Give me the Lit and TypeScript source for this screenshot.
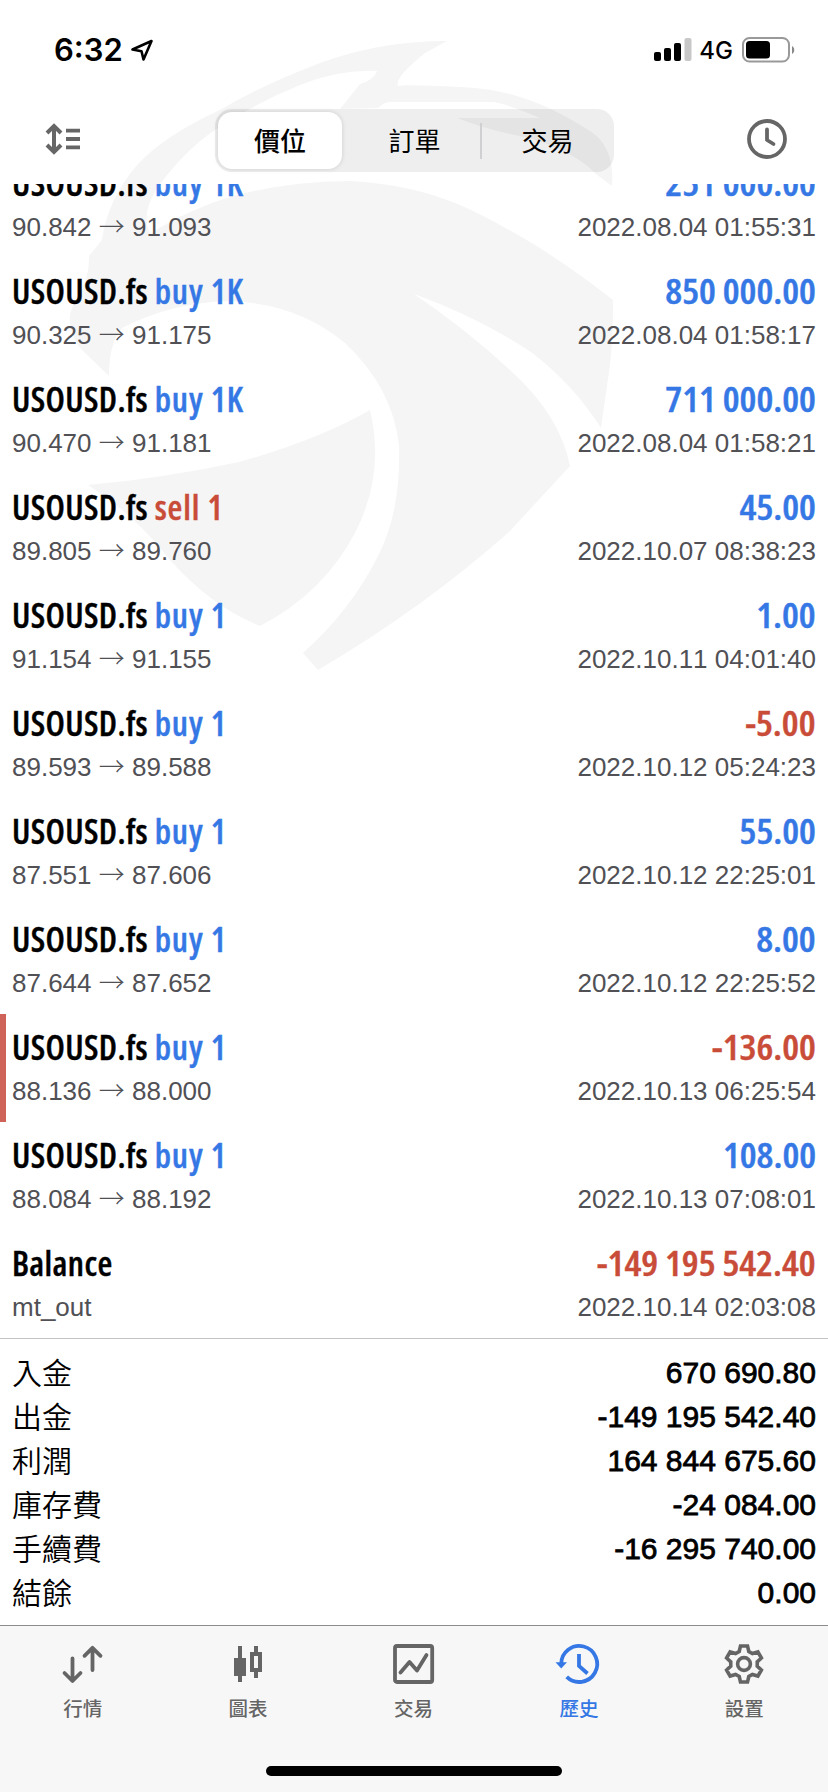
import { LitElement, html, svg, css } from "lit";
import { customElement, property } from "lit/decorators.js";
import { classMap } from "lit/directives/class-map.js";

interface Deal {
  symbol: string;
  side?: "buy" | "sell";
  volume?: string;
  detail: string;
  to?: string;
  profit: string;
  time: string;
  stopped?: boolean;
}

const S = "USOUSD.fs";
const DEALS: Deal[] = [
  { symbol: S, side: "buy", volume: "1K", detail: "90.842", to: "91.093", profit: "251 000.00", time: "2022.08.04 01:55:31" },
  { symbol: S, side: "buy", volume: "1K", detail: "90.325", to: "91.175", profit: "850 000.00", time: "2022.08.04 01:58:17" },
  { symbol: S, side: "buy", volume: "1K", detail: "90.470", to: "91.181", profit: "711 000.00", time: "2022.08.04 01:58:21" },
  { symbol: S, side: "sell", volume: "1", detail: "89.805", to: "89.760", profit: "45.00", time: "2022.10.07 08:38:23" },
  { symbol: S, side: "buy", volume: "1", detail: "91.154", to: "91.155", profit: "1.00", time: "2022.10.11 04:01:40" },
  { symbol: S, side: "buy", volume: "1", detail: "89.593", to: "89.588", profit: "-5.00", time: "2022.10.12 05:24:23" },
  { symbol: S, side: "buy", volume: "1", detail: "87.551", to: "87.606", profit: "55.00", time: "2022.10.12 22:25:01" },
  { symbol: S, side: "buy", volume: "1", detail: "87.644", to: "87.652", profit: "8.00", time: "2022.10.12 22:25:52" },
  { symbol: S, side: "buy", volume: "1", detail: "88.136", to: "88.000", profit: "-136.00", time: "2022.10.13 06:25:54", stopped: true },
  { symbol: S, side: "buy", volume: "1", detail: "88.084", to: "88.192", profit: "108.00", time: "2022.10.13 07:08:01" },
  { symbol: "Balance", detail: "mt_out", profit: "-149 195 542.40", time: "2022.10.14 02:03:08" },
];

const TOTALS: [string, string][] = [
  ["入金", "670 690.80"],
  ["出金", "-149 195 542.40"],
  ["利潤", "164 844 675.60"],
  ["庫存費", "-24 084.00"],
  ["手續費", "-16 295 740.00"],
  ["結餘", "0.00"],
];

function gearPath(): string {
  const pts: string[] = [];
  const at = (deg: number, r: number) => {
    const a = (deg * Math.PI) / 180;
    pts.push(`${(22 + r * Math.cos(a)).toFixed(2)} ${(22 + r * Math.sin(a)).toFixed(2)}`);
  };
  for (let k = 0; k < 6; k++) {
    const c = -90 + k * 60;
    at(c - 21, 13.4);
    at(c - 11, 18.4);
    at(c + 11, 18.4);
    at(c + 21, 13.4);
  }
  return `M${pts.join("L")}Z`;
}

const ICONS = {
  quotes: svg`<g fill="none" stroke="currentColor" stroke-width="3.8" stroke-linecap="round" stroke-linejoin="round">
    <path d="M11.500 16.500V38M3.500 31l8 8 8-8M31.500 28V6.500M23.500 13.800l8-8 8 8"/></g>`,
  chart: svg`<g fill="currentColor"><path d="M12 4h4v12h4v18h-4v6h-4v-6H8V16h4z"/>
    <path fill-rule="evenodd" d="M28 4h4v6h4v20h-4v6h-4v-6h-4V10h4zM28 14v12h4V14z"/></g>`,
  trade: svg`<g fill="none" stroke="currentColor" stroke-width="3.8" stroke-linejoin="round">
    <rect x="3" y="4" width="37.200" height="36" rx="2"/>
    <path d="M8.500 30.500l9-10.500 7.500 8.500L34.500 13" stroke-linecap="round"/></g>`,
  history: svg`<g fill="none" stroke="currentColor" stroke-width="3.800">
    <path d="M4.200 22A18 18 0 1 1 9.700 34.900M22 12v12l8.500 7.500"/>
    <path d="M-1.500 20.300H10L4.200 26.500z" fill="currentColor" stroke="none"/></g>`,
  settings: svg`<g fill="none" stroke="currentColor" stroke-width="3.600" stroke-linejoin="miter">
    <path d=${gearPath()}/><circle cx="22" cy="22" r="6.400"/></g>`,
};

@customElement("deal-row")
class DealRow extends LitElement {
  @property({ attribute: false }) deal!: Deal;

  static styles = css`
    :host {
      display: block;
      height: 108px;
      flex: none;
    }
    .row {
      box-sizing: border-box;
      height: 108px;
      padding: 10px 12px 0 12px;
      position: relative;
    }
    .row.stopped::before {
      content: "";
      position: absolute;
      left: 0;
      top: 0;
      width: 6px;
      height: 108px;
      background: #cf635a;
    }
    .line {
      display: flex;
      justify-content: space-between;
      white-space: pre;
    }
    .main {
      height: 47px;
      font: 600 34px/46px "Open Sans", "Noto Sans", sans-serif;
      font-stretch: 75%;
      color: #000;
      -webkit-text-stroke: 0.4px currentColor;
    }
    .left { letter-spacing: 0.38px; }
    .side { letter-spacing: 0.9px; }
    .right {
      transform: scaleX(1.108);
      transform-origin: right center;
    }
    .sub {
      height: 40px;
      font: 26px/40px "Liberation Sans", Arial, sans-serif;
      font-kerning: none;
      color: #505055;
    }
    .arrow {
      font-family: "Noto Sans CJK TC", sans-serif;
      font-weight: 300;
      line-height: 1;
    }
    .blue { color: #3578e5; -webkit-text-stroke-color: #3578e5; }
    .red { color: #c94c39; -webkit-text-stroke-color: #c94c39; }
  `;

  render() {
    const d = this.deal;
    const loss = d.profit.startsWith("-");
    return html`<div class=${classMap({ row: true, stopped: !!d.stopped })}>
      <div class="line main">
        <span class="left">${d.symbol}${d.side
          ? html` <span class=${d.side === "buy" ? "side blue" : "side red"}>${d.side} ${d.volume}</span>`
          : ""}</span>
        <span class=${loss ? "right red" : "right blue"}>${d.profit}</span>
      </div>
      <div class="line sub">
        <span>${d.detail}${d.to ? html` <span class="arrow">→</span> ${d.to}` : ""}</span>
        <span>${d.time}</span>
      </div>
    </div>`;
  }
}

@customElement("tab-item")
class TabItem extends LitElement {
  @property() icon: keyof typeof ICONS = "quotes";
  @property() label = "";
  @property({ type: Boolean }) active = false;

  static styles = css`
    :host { display: block; flex: 1; }
    .tab {
      display: flex;
      flex-direction: column;
      align-items: center;
      padding-top: 16px;
      color: #656565;
      font: 500 19.500px/28px "Noto Sans CJK TC", sans-serif;
    }
    .tab.active { color: #3578e5; }
    .icon { width: 44px; height: 44px; overflow: visible; display: block; }
    .label { margin-top: 8px; }
  `;

  render() {
    return html`<div class=${classMap({ tab: true, active: this.active })}>
      <svg class="icon" viewBox="0 0 44 44">${ICONS[this.icon]}</svg>
      <span class="label">${this.label}</span>
    </div>`;
  }
}

@customElement("app-root")
class AppRoot extends LitElement {
  static styles = css`
    :host { display: block; }
    .screen {
      position: relative;
      width: 828px;
      height: 1792px;
      overflow: hidden;
      display: flex;
      flex-direction: column;
      background: #fff;
      isolation: isolate;
    }
    .watermark {
      position: absolute;
      left: 0;
      top: 0;
      z-index: -1;
      width: 828px;
      height: 700px;
      pointer-events: none;
    }
    .status {
      height: 88px;
      flex: none;
      display: flex;
      justify-content: space-between;
      padding: 0 32px 0 54px;
      box-sizing: border-box;
    }
    .clock { display: flex; gap: 8px; padding-top: 30px; height: 40px; }
    .time { font: 600 31px/40px Inter, sans-serif; color: #000; }
    .signals { display: flex; padding-top: 36px; }
    .net { font: 500 24px/30px Inter, sans-serif; margin: 0 9px 0 7px; color: #000; }
    .loc { margin-top: 8px; }
    .toolbar {
      height: 96px;
      flex: none;
      display: flex;
      justify-content: space-between;
      align-items: flex-start;
      padding: 21px 39px 0 44px;
      box-sizing: border-box;
    }
    .sort { margin-top: 12px; width: 40px; height: 36px; margin-right: 9px; }
    .segments {
      display: flex;
      width: 399px;
      height: 63px;
      border-radius: 17px;
      background: rgba(0, 0, 0, 0.068);
      margin-left: -9px;
    }
    .segment {
      flex: 0 0 133px;
      box-sizing: border-box;
      padding-bottom: 2px;
      display: flex;
      align-items: center;
      justify-content: center;
      font: 400 26px/36px "Noto Sans CJK TC", sans-serif;
      color: #000;
    }
    .segment.on {
      flex-basis: 124px;
      margin: 3px 6px 3px 3px;
      border-radius: 14px;
      background: #fff;
      box-shadow: 0 0 5px rgba(0, 0, 0, 0.14);
      font-weight: 500;
    }
    .rule { width: 2px; height: 36px; margin: 14px -1px 0 -1px; background: #d0d0d2; }
    .list {
      height: 1154px;
      flex: none;
      overflow: hidden;
      display: flex;
      flex-direction: column;
      justify-content: flex-end;
    }
    .totals {
      flex: none;
      height: 287px;
      box-sizing: border-box;
      border-top: 1px solid #c4c4c4;
      padding: 11px 12px 0 12px;
    }
    .total { display: flex; justify-content: space-between; height: 44px; color: #000; }
    .name { font: 350 30px/44px "Noto Sans CJK TC", sans-serif; margin-top: -1px; }
    .value {
      font: 30px/44px "Liberation Sans", Arial, sans-serif;
      font-kerning: none;
      -webkit-text-stroke: 0.8px #000;
      padding-top: 1px;
    }
    .tabs {
      flex: 1;
      display: flex;
      align-items: flex-start;
      background: #f7f7f7;
      border-top: 1px solid #8c8c8c;
      padding-right: 1px;
    }
    .home {
      position: absolute;
      left: 266px;
      bottom: 16px;
      width: 296px;
      height: 10px;
      border-radius: 5px;
      background: #000;
    }
  `;

  render() {
    return html`<div class="screen">
      <svg class="watermark" viewBox="0 0 828 700">
        <g fill="#f5f5f5">
          <path d="M447 41Q380 41 320 63Q260 86 222 109Q165 135 138 164Q108 198 102 240L89 256Q90 277 77 299Q61 321 80 348L109 376Q109 343 122 328Q170 303 228 301Q297 303 345 343Q393 388 399 446Q401 513 377 558Q350 611 303 653L318 670Q425 607 510 531L570 466Q560 415 510 370Q467 330 414 294Q478 317 531 352Q573 384 601 428L608 379Q613 348 613 300Q575 270 535 245Q490 218 460 205Q410 184 350 181Q270 182 212 203Q175 217 150 234Q140 214 158 187Q185 150 215 130Q255 103 300 85Q340 69 377 71Q374 80 360 84L340 109L378 108Q384 102 390 102H494Q510 105 540 118L457 118Q490 131 530 138Q575 152 596 174L612 186Q615 147 590 131Q530 92 475 88Q410 84 398 86Q394 78 425 53Z"/>
          <path d="M370 410Q318 440 239 462Q165 478 88 485Q133 513 170 560Q212 607 260 626Q324 593 356 531Q385 473 370 410Z"/>
        </g>
      </svg>
      <div class="status">
        <div class="clock">
          <span class="time">6:32</span>
          <svg class="loc" width="24" height="26" viewBox="0 0 24 26">
            <path d="M1.500 11.500L20.500 3 12.500 21.500 10.500 13.200z" fill="none" stroke="#000" stroke-width="2.600" stroke-linejoin="round"/>
          </svg>
        </div>
        <div class="signals">
          <svg width="38" height="28" viewBox="0 0 38 28">
            <rect x="0" y="16" width="7" height="9" rx="2"/>
            <rect x="10" y="12" width="7" height="13" rx="2"/>
            <rect x="20" y="7" width="7" height="18" rx="2"/>
            <rect x="30.500" y="2" width="7" height="23" rx="2" fill="#c8c8c8"/>
          </svg>
          <span class="net">4G</span>
          <svg width="54" height="28" viewBox="0 0 54 28">
            <rect x="1" y="2" width="46" height="23.500" rx="6.500" fill="none" stroke="#999" stroke-width="2"/>
            <rect x="4" y="5" width="24" height="17.500" rx="3.500"/>
            <path d="M50 10c3 1.500 3 6.500 0 8z" fill="#888"/>
          </svg>
        </div>
      </div>
      <div class="toolbar">
        <svg class="sort" viewBox="0 0 40 36">
          <path d="M10 5.500v25M3 12l7-7 7 7M3 24l7 7 7-7" fill="none" stroke="#666" stroke-width="4"/>
          <path d="M22 7.800h14v3.800H22zM22 16.100h14v3.800H22zM22 24.400h14v3.800H22z" fill="#666"/>
        </svg>
        <div class="segments">
          <div class="segment on">價位</div>
          <div class="segment">訂單</div>
          <div class="rule"></div>
          <div class="segment">交易</div>
        </div>
        <svg width="44" height="60" viewBox="0 0 44 60">
          <g fill="none" stroke="#666" stroke-width="3.800">
            <circle cx="22" cy="30" r="18"/>
            <path d="M22 20.500V31l6.500 4" stroke-linecap="round" stroke-linejoin="round"/>
          </g>
        </svg>
      </div>
      <div class="list">${DEALS.map((d) => html`<deal-row .deal=${d}></deal-row>`)}</div>
      <div class="totals">
        ${TOTALS.map(
          ([name, value]) => html`<div class="total"><span class="name">${name}</span><span class="value">${value}</span></div>`
        )}
      </div>
      <div class="tabs">
        <tab-item icon="quotes" label="行情"></tab-item>
        <tab-item icon="chart" label="圖表"></tab-item>
        <tab-item icon="trade" label="交易"></tab-item>
        <tab-item icon="history" label="歷史" active></tab-item>
        <tab-item icon="settings" label="設置"></tab-item>
      </div>
      <div class="home"></div>
    </div>`;
  }
}
